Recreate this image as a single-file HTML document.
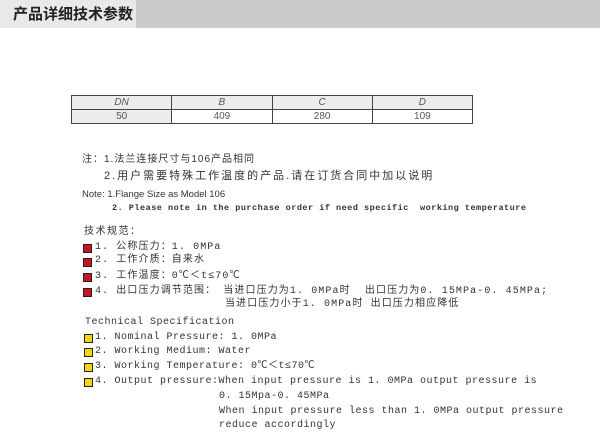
<!DOCTYPE html>
<html><head><meta charset="utf-8"><style>
body{margin:0;width:600px;height:434px;background:#fff;position:relative;overflow:hidden;font-family:"Liberation Sans","Noto Sans CJK SC",sans-serif;color:#333}
.bar{position:absolute;left:0;top:0;width:600px;height:28px;background:#cbcbcb}
.tab{position:absolute;left:0;top:0;width:136px;height:28px;background:#e9e9e9;font-weight:bold;font-size:15px;line-height:30px;text-indent:13px;color:#222}
table{position:absolute;left:71px;top:95px;width:402px;border-collapse:collapse;font-size:10px;color:#555;table-layout:fixed}
td{border:1px solid #444;height:13px;padding:0;text-align:center;line-height:13px;width:25%}
.g{background:#ececec}
.l{position:absolute;white-space:pre;font-size:10px;line-height:14px}
.m{font-family:"Liberation Mono","Noto Sans CJK SC",monospace;font-size:10px;letter-spacing:0.5px}
.sq{position:absolute;width:7px;height:7px;border:1px solid #222}
.r{background:#c8161d}.y{background:#f2d80b}
.c{letter-spacing:1.1px}
</style></head><body>
<div class="bar"></div><div class="tab">产品详细技术参数</div>
<table><tr class="g"><td><i>DN</i></td><td><i>B</i></td><td><i>C</i></td><td><i>D</i></td></tr>
<tr><td class="g">50</td><td>409</td><td>280</td><td>109</td></tr></table>
<div class="l" style="left:82px;top:153px;letter-spacing:1px">注：1.法兰连接尺寸与106产品相同</div>
<div class="l" style="left:104px;top:169px;font-size:11px;letter-spacing:2px">2.用户需要特殊工作温度的产品.请在订货合同中加以说明</div>
<div class="l" style="left:82px;top:188px;font-size:9.5px">Note: 1.Flange Size as Model 106</div>
<div class="l m" style="left:112px;top:201px;font-size:8.5px;letter-spacing:0.5px;font-weight:bold">2. Please note in the purchase order if need specific  working temperature</div>
<div class="l" style="left:84px;top:225px;letter-spacing:1.5px">技术规范：</div>
<div class="sq r" style="left:83px;top:244px"></div><div class="l m c" style="left:95px;top:241px">1. 公称压力：1. 0MPa</div>
<div class="sq r" style="left:83px;top:258px"></div><div class="l m c" style="left:95px;top:254px">2. 工作介质：自来水</div>
<div class="sq r" style="left:83px;top:273px"></div><div class="l m c" style="left:95px;top:270px">3. 工作温度：0℃＜t≤70℃</div>
<div class="sq r" style="left:83px;top:288px"></div><div class="l m c" style="left:95px;top:285px">4. 出口压力调节范围： 当进口压力为1. 0MPa时  出口压力为0. 15MPa-0. 45MPa;</div>
<div class="l m c" style="left:225px;top:298px">当进口压力小于1. 0MPa时 出口压力相应降低</div>
<div class="l m" style="left:85px;top:316px">Technical Specification</div>
<div class="sq y" style="left:84px;top:334px"></div><div class="l m" style="left:95px;top:331px">1. Nominal Pressure: 1. 0MPa</div>
<div class="sq y" style="left:84px;top:348px"></div><div class="l m" style="left:95px;top:345px">2. Working Medium: Water</div>
<div class="sq y" style="left:84px;top:363px"></div><div class="l m" style="left:95px;top:360px">3. Working Temperature: 0℃＜t≤70℃</div>
<div class="sq y" style="left:84px;top:378px"></div><div class="l m" style="left:95px;top:375px">4. Output pressure:When input pressure is 1. 0MPa output pressure is</div>
<div class="l m" style="left:219px;top:390px">0. 15Mpa-0. 45MPa</div>
<div class="l m" style="left:219px;top:405px">When input pressure less than 1. 0MPa output pressure</div>
<div class="l m" style="left:219px;top:419px">reduce accordingly</div>
</body></html>
